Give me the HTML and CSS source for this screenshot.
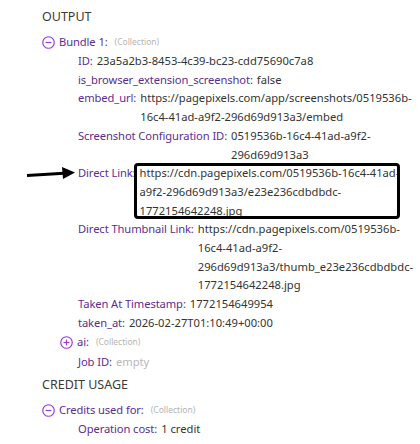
FILE: index.html
```html
<!DOCTYPE html>
<html>
<head>
<meta charset="utf-8">
<link rel="stylesheet" href="styles.css">
</head>
<body>
<div class="page">
  <h2 class="section">OUTPUT</h2>
  <div class="level">
    <div class="coll-row">
      <svg class="toggle" viewBox="0 0 12 12"><circle cx="6" cy="6" r="5.3"/><line x1="3.3" y1="6" x2="8.7" y2="6"/></svg>
      <span class="label">Bundle 1:</span><span class="meta">(Collection)</span>
    </div>
    <div class="children">
      <div class="field"><span class="label">ID:</span><span class="value">23a5a2b3-8453-4c39-bc23-cdd75690c7a8</span></div>
      <div class="field"><span class="label">is_browser_extension_screenshot:</span><span class="value">false</span></div>
      <div class="field"><span class="label">embed_url:</span><span class="value">https://pagepixels.com/app/screenshots/0519536b-16c4-41ad-a9f2-296d69d913a3/embed</span></div>
      <div class="field"><span class="label">Screenshot Configuration ID:</span><span class="value">0519536b-16c4-41ad-a9f2-296d69d913a3</span></div>
      <div class="field highlighted">
        <svg class="arrow" viewBox="0 0 50 16"><path d="M1 10.5 L38 8.2" /><polygon points="36,2 49,7.5 37,14" /></svg>
        <span class="label">Direct Link:</span><span class="value boxed">https://cdn.pagepixels.com/0519536b-16c4-41ad-a9f2-296d69d913a3/e23e236cdbdbdc-1772154642248.jpg</span>
      </div>
      <div class="field"><span class="label">Direct Thumbnail Link:</span><span class="value">https://cdn.pagepixels.com/0519536b-16c4-41ad-a9f2-296d69d913a3/thumb_e23e236cdbdbdc-1772154642248.jpg</span></div>
      <div class="field"><span class="label">Taken At Timestamp:</span><span class="value">1772154649954</span></div>
      <div class="field"><span class="label">taken_at:</span><span class="value">2026-02-27T01:10:49+00:00</span></div>
      <div class="coll-row">
        <svg class="toggle" viewBox="0 0 12 12"><circle cx="6" cy="6" r="5.3"/><line x1="3.3" y1="6" x2="8.7" y2="6"/><line x1="6" y1="3.3" x2="6" y2="8.7"/></svg>
        <span class="label">ai:</span><span class="meta">(Collection)</span>
      </div>
      <div class="field"><span class="label">Job ID:</span><span class="value empty">empty</span></div>
    </div>
  </div>
  <h2 class="section second">CREDIT USAGE</h2>
  <div class="level">
    <div class="coll-row">
      <svg class="toggle" viewBox="0 0 12 12"><circle cx="6" cy="6" r="5.3"/><line x1="3.3" y1="6" x2="8.7" y2="6"/></svg>
      <span class="label">Credits used for:</span><span class="meta">(Collection)</span>
    </div>
    <div class="children">
      <div class="field"><span class="label">Operation cost:</span><span class="value">1 credit</span></div>
    </div>
  </div>
</div>
</body>
</html>
```
FILE: styles.css
```css
html, body {
  margin: 0;
  padding: 0;
  background: #fff;
}
body {
  font-family: "Noto Sans", "Open Sans", sans-serif;
  font-size: 11.2px;
  color: #333;
}
.page {
  width: 360px;
  padding: 6px 0 0 42px;
}
.section {
  margin: 0;
  font-size: 12.5px;
  font-weight: 400;
  color: #3a3a3a;
  line-height: 22px;
}
.section.second {
  margin-top: 3px;
}
.level {
  padding-left: 18px;
  margin-top: 4px;
}
.coll-row {
  position: relative;
  display: flex;
  align-items: center;
  line-height: 18.7px;
  margin-left: -18px;
  height: 20px;
}
.toggle {
  width: 13px;
  height: 13px;
  margin-right: 4px;
  fill: none;
  stroke: #9a3ed8;
  stroke-width: 1.1;
}
.children {
  padding-left: 18px;
}
.field {
  position: relative;
  display: flex;
  line-height: 18.7px;
}
.label {
  color: #5b2d90;
  white-space: nowrap;
  margin-right: 4px;
  letter-spacing: -0.1px;
}
.value {
  flex: 1;
  min-width: 0;
}
.meta {
  font-size: 8.5px;
  color: #b4b4b4;
  margin-left: 3px;
  letter-spacing: 0;
}
.empty {
  color: #b9b9b9;
}
.boxed {
  position: relative;
}
.boxed::after {
  content: "";
  position: absolute;
  left: -6px;
  right: 2px;
  top: -1px;
  bottom: 1px;
  border: 3px solid #000;
  border-radius: 4px;
}
.arrow {
  position: absolute;
  left: -52px;
  top: 1px;
  width: 50px;
  height: 16px;
}
.arrow path {
  stroke: #000;
  stroke-width: 3;
  fill: none;
}
.arrow polygon {
  fill: #000;
}
```
